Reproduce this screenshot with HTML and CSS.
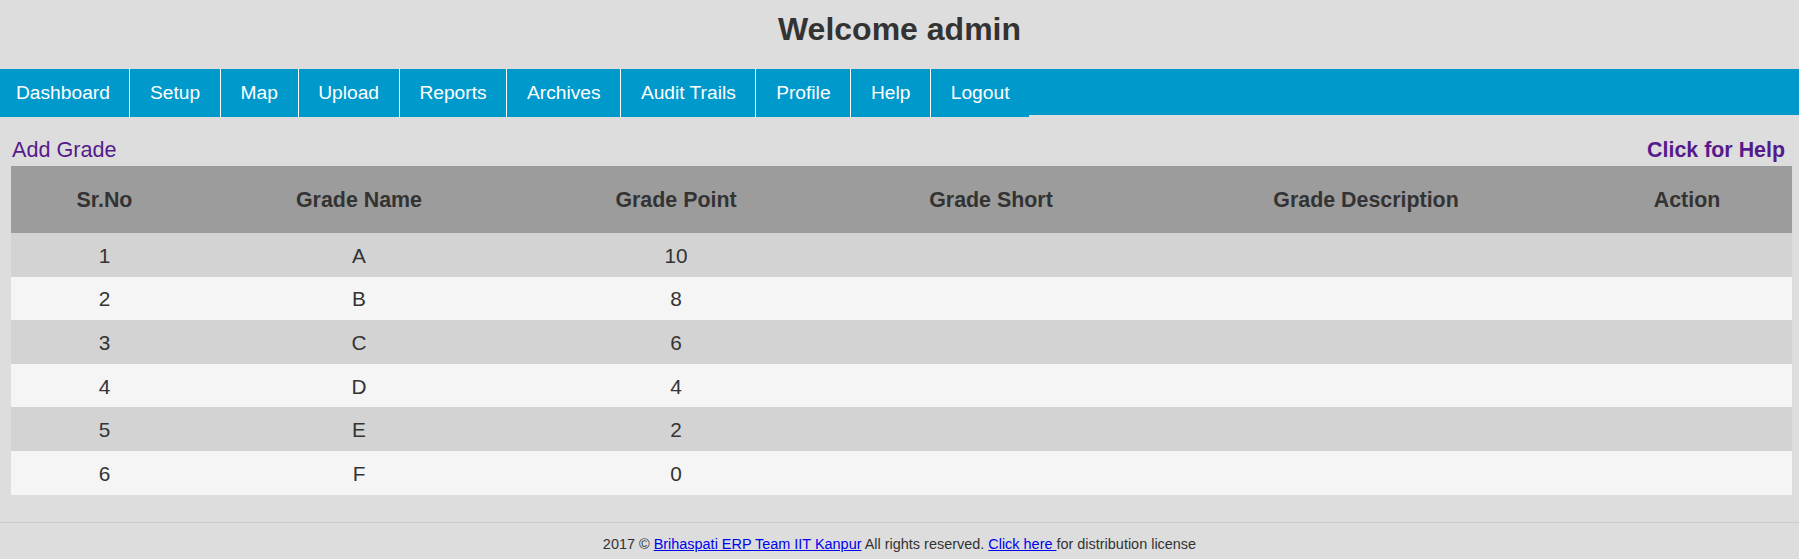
FILE: index.html
```html
<!DOCTYPE html>
<html>
<head>
<meta charset="utf-8">
<title>Grades</title>
<link rel="stylesheet" href="styles.css">
</head>
<body>
<header class="top">
  <h1 class="welcome">Welcome admin</h1>
</header>
<nav class="menu">
  <a class="menu-item first" href="#">Dashboard</a>
  <a class="menu-item" href="#">Setup</a>
  <a class="menu-item" href="#">Map</a>
  <a class="menu-item" href="#">Upload</a>
  <a class="menu-item" href="#">Reports</a>
  <a class="menu-item" href="#">Archives</a>
  <a class="menu-item" href="#">Audit Trails</a>
  <a class="menu-item" href="#">Profile</a>
  <a class="menu-item" href="#">Help</a>
  <a class="menu-item" href="#">Logout</a>
</nav>
<main class="content">
  <div class="toolbar">
    <a class="add-link" href="#">Add Grade</a>
    <a class="help-link" href="#">Click for Help</a>
  </div>
  <table class="grades">
    <colgroup>
      <col class="c1"><col class="c2"><col class="c3"><col class="c4"><col class="c5"><col class="c6">
    </colgroup>
    <thead>
      <tr><th>Sr.No</th><th>Grade Name</th><th>Grade Point</th><th>Grade Short</th><th>Grade Description</th><th>Action</th></tr>
    </thead>
    <tbody>
      <tr><td>1</td><td>A</td><td>10</td><td></td><td></td><td></td></tr>
      <tr><td>2</td><td>B</td><td>8</td><td></td><td></td><td></td></tr>
      <tr><td>3</td><td>C</td><td>6</td><td></td><td></td><td></td></tr>
      <tr><td>4</td><td>D</td><td>4</td><td></td><td></td><td></td></tr>
      <tr><td>5</td><td>E</td><td>2</td><td></td><td></td><td></td></tr>
      <tr><td>6</td><td>F</td><td>0</td><td></td><td></td><td></td></tr>
    </tbody>
  </table>
</main>
<footer class="foot">
  2017 &copy; <a class="foot-link" href="#">Brihaspati ERP Team IIT Kanpur</a> All rights reserved. <a class="foot-link" href="#">Click here </a>for distribution license
</footer>
</body>
</html>
```
FILE: styles.css
```css
html, body {
  margin: 0;
  padding: 0;
}
body {
  background: #dddddd;
  font-family: "Liberation Sans", Arial, sans-serif;
  color: #333333;
  width: 1799px;
  height: 559px;
  overflow: hidden;
}
.top {
  padding: 11px 0 21px;
  text-align: center;
}
.welcome {
  margin: 0;
  font-size: 32px;
  line-height: 37px;
  font-weight: bold;
  color: #333333;
}
.menu {
  display: flex;
  height: 46px;
  background: #0099cc;
}
.menu-item {
  display: block;
  height: 48px;
  line-height: 48px;
  padding: 0 19.7px;
  font-size: 19.2px;
  color: #ffffff;
  text-decoration: none;
  background: #0099cc;
  border-left: 1px solid #ffffff;
  white-space: nowrap;
}
.menu-item.first {
  border-left: none;
  padding-left: 16px;
  padding-right: 19.4px;
}
.content {
  padding: 0 7px 0 11px;
}
.toolbar {
  display: flex;
  justify-content: space-between;
  margin-top: 23px;
  height: 24px;
  line-height: 24px;
  font-size: 21.4px;
  padding-left: 1px;
}
.add-link {
  color: #551a8b;
  text-decoration: none;
  font-size: 21.6px;
}
.help-link {
  color: #551a8b;
  font-weight: bold;
  text-decoration: none;
  padding-right: 7px;
}
.grades {
  margin-top: 4px;
  width: 1781px;
  border-collapse: collapse;
  table-layout: fixed;
}
.c1 { width: 187px; }
.c2 { width: 322px; }
.c3 { width: 312px; }
.c4 { width: 318px; }
.c5 { width: 432px; }
.c6 { width: 210px; }
.grades th {
  box-sizing: border-box;
  height: 67px;
  padding: 2px 0 0;
  background: #9c9c9c;
  font-size: 21.4px;
  font-weight: bold;
  color: #333333;
  text-align: center;
}
.grades td {
  box-sizing: border-box;
  height: 43.6px;
  padding: 2px 0 0;
  font-size: 20.8px;
  color: #333333;
  text-align: center;
}
.grades tbody tr:nth-child(odd) {
  background: #d3d3d3;
}
.grades tbody tr:nth-child(even) {
  background: #f5f5f5;
}
.foot {
  margin-top: 27.5px;
  border-top: 1px solid #cbcbcb;
  padding-top: 13px;
  text-align: center;
  font-size: 14.45px;
  color: #333333;
}
.foot-link {
  color: #0000ee;
  text-decoration: underline;
}
```
